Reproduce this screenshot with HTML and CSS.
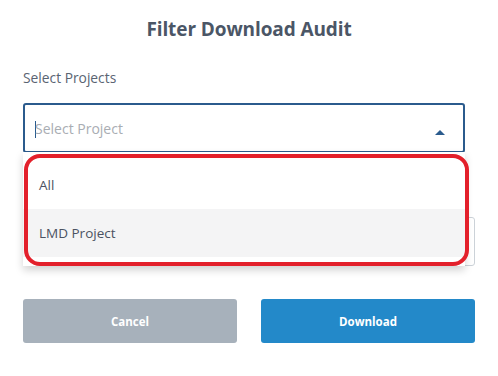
FILE: index.html
```html
<!DOCTYPE html>
<html lang="en">
<head>
    <meta charset="UTF-8">
    <meta name="viewport" content="width=device-width, initial-scale=1.0">
    <title>Filter Download Audit</title>
    <link rel="stylesheet" href="styles.css">
</head>
<body>
    <div class="modal">
        <h2 class="title">Filter Download Audit</h2>

        <div class="field">
            <label class="field-label">Select Projects</label>
            <div class="select-wrap">
                <div class="select open">
                    <span class="caret"></span>
                    <span class="placeholder">Select Project</span>
                    <span class="arrow"></span>
                </div>
                <ul class="dropdown">
                    <li>All</li>
                    <li class="hover">LMD Project</li>
                </ul>
                <div class="highlight"></div>
            </div>
        </div>

        <div class="field hidden-field">
            <div class="input-under"></div>
        </div>

        <div class="actions">
            <button class="btn btn-cancel">Cancel</button>
            <button class="btn btn-download">Download</button>
        </div>
    </div>
</body>
</html>
```

FILE: styles.css
```css
body {
    font-family: "Open Sans", "Noto Sans", sans-serif;
    margin: 0;
    padding: 0;
    background-color: #fff;
    overflow: hidden;
}

.modal {
    padding: 14px 23px 0 23px;
}

.title {
    margin: 0;
    text-align: center;
    font-size: 19px;
    font-weight: 700;
    color: #4b5666;
    letter-spacing: -0.1px;
    line-height: 30px;
}

.field-label {
    display: block;
    margin-top: 25px;
    font-size: 13.8px;
    color: #5a6472;
    line-height: 18px;
}

.select-wrap {
    position: relative;
    margin-top: 16px;
    width: 442px;
}

.select {
    box-sizing: border-box;
    height: 50px;
    border: 2px solid #2b5b8d;
    border-radius: 3px;
    display: flex;
    align-items: center;
    padding-left: 10px;
    padding-right: 18px;
}

.caret {
    width: 1px;
    height: 17px;
    background-color: #2b5b8d;
    margin-top: 2px;
}

.placeholder {
    flex: 1;
    font-size: 14px;
    color: #a9adb3;
    margin-left: -1px;
    margin-top: 1px;
}

.arrow {
    width: 0;
    height: 0;
    border-left: 5px solid transparent;
    border-right: 5px solid transparent;
    border-bottom: 5px solid #2b5b8d;
    margin-top: 9px;
}

.dropdown {
    position: absolute;
    top: 49px;
    left: 0;
    right: 0;
    margin: 0;
    padding: 9px 0 9px 0;
    list-style-type: none;
    background-color: #fff;
    box-shadow: 0 4px 8px rgba(0, 0, 0, 0.18);
    z-index: 5;
}

.dropdown li {
    height: 48px;
    line-height: 48px;
    padding-left: 16px;
    font-size: 13.5px;
    color: #4b5262;
}

.dropdown li.hover {
    background-color: #f4f4f5;
}

.highlight {
    position: absolute;
    top: 51px;
    left: 1px;
    width: 445px;
    height: 112px;
    box-sizing: border-box;
    border: 4px solid #e3202b;
    border-radius: 16px;
    z-index: 6;
}

.hidden-field {
    margin-top: 64px;
}

.input-under {
    box-sizing: border-box;
    height: 49px;
    border: 1px solid #ccd2d8;
    border-radius: 3px;
}

.actions {
    display: flex;
    gap: 24px;
    margin-top: 33px;
}

.btn {
    flex: 1;
    height: 44px;
    border: none;
    border-radius: 3px;
    color: #fff;
    font-family: "Open Sans", sans-serif;
    font-size: 11.5px;
    font-weight: 700;
    cursor: pointer;
}

.btn-cancel {
    background-color: #a7b1bb;
}

.btn-download {
    background-color: #2389c9;
}
```
